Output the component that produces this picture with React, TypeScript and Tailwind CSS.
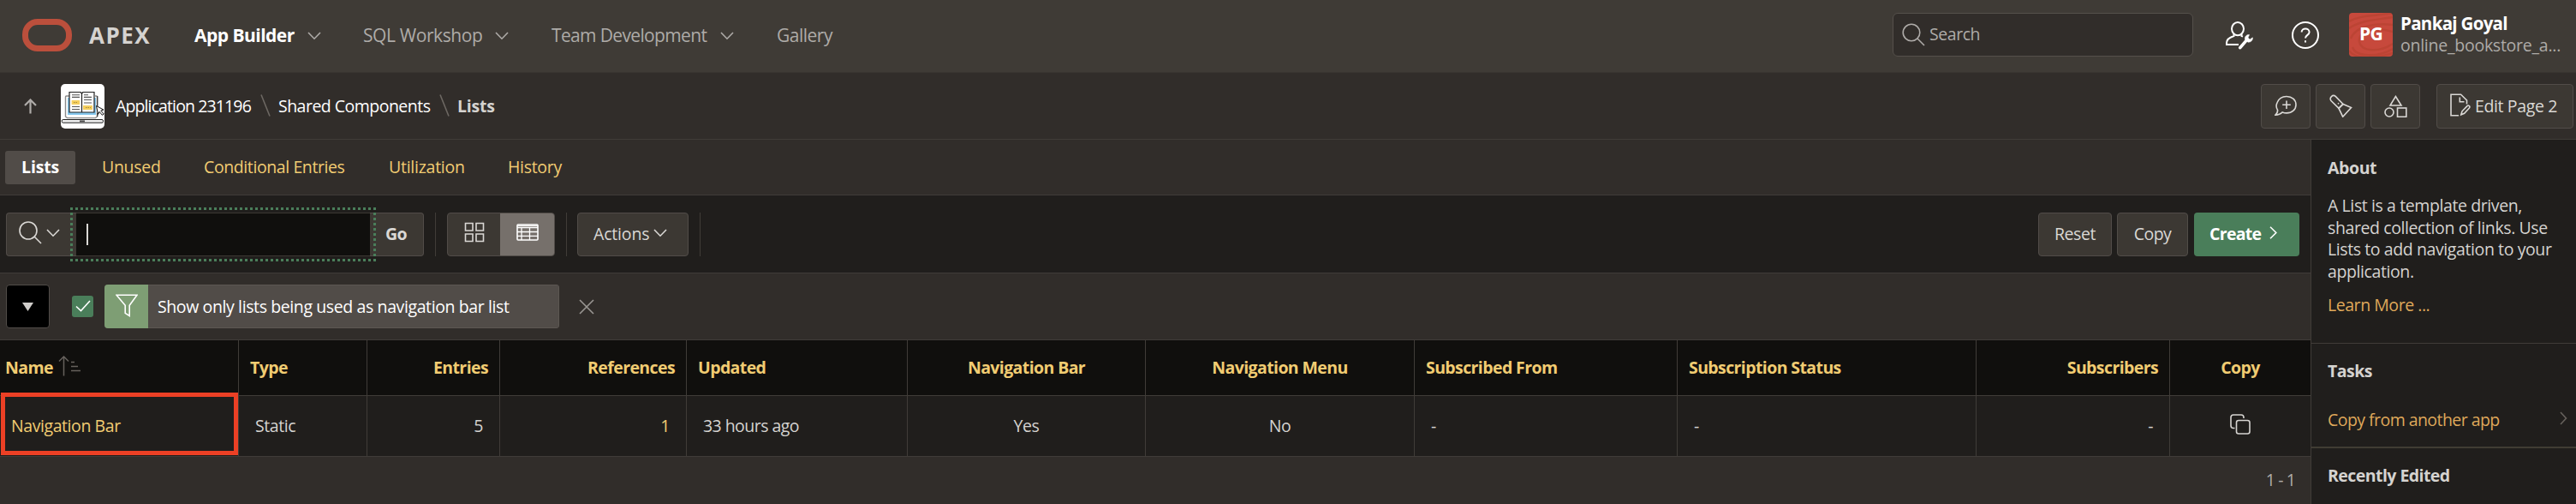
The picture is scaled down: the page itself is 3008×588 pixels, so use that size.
import type { ReactNode } from "react";

function Svg({ w, h, className = "", sw = 1.6, children }: { w: number; h: number; className?: string; sw?: number; children: ReactNode }) {
  return (
    <svg width={w} height={h} viewBox={`0 0 ${w} ${h}`} fill="none" stroke="currentColor" strokeWidth={sw} className={`shrink-0 ${className}`}>
      {children}
    </svg>
  );
}

function Chevron({ className = "" }: { className?: string }) {
  return (
    <Svg w={16} h={10} className={className}>
      <path d="M1 1l7 7.2L15 1" />
    </Svg>
  );
}

function TopBar() {
  return (
    <header className="flex h-[85px] items-center border-b border-[#393531] bg-[#3f3b36]">
      <div className="flex w-[201px] items-center pl-[26px]">
        <Svg w={58} h={38} sw={7} className="-mt-0.5 text-[#bb4f3c]">
          <rect x="3.5" y="3.5" width="51" height="31" rx="14.5" />
        </Svg>
        <span className="-mt-0.5 ml-5 text-[26px] font-bold tracking-[1.5px] text-[#d5d3d0]">APEX</span>
      </div>
      <nav className="flex items-center text-[21px] text-[#aeaba8]">
        <a className="flex w-[197px] items-center justify-between pl-[26px] font-bold tracking-[-0.52px] text-white">
          App Builder<Chevron className="mr-[23px] text-[#aeaba8]" />
        </a>
        <a className="flex w-[220px] items-center justify-between pl-[26px] tracking-[-0.4px]">
          SQL Workshop<Chevron className="mr-[24px]" />
        </a>
        <a className="flex w-[263px] items-center justify-between pl-[26px] tracking-[-0.65px]">
          Team Development<Chevron className="mr-[24px]" />
        </a>
        <a className="pl-[26px] tracking-[-0.5px]">Gallery</a>
      </nav>
      <div className="ml-auto flex items-center">
        <div className="-mt-1 flex h-[51px] w-[351px] items-center rounded-[6px] border-[1.5px] border-[#55504b] bg-[#312d2a] pl-[10px] text-[#aeaba8]">
          <Svg w={27} h={27}>
            <circle cx="11" cy="11" r="9.8" />
            <path d="M18 18l8 8" />
          </Svg>
          <span className="ml-[5px] text-[19.5px] tracking-[-0.45px]">Search</span>
        </div>
        <Svg w={32} h={33} sw={2} className="-mt-0.5 ml-[38px] text-white">
          <ellipse cx="14" cy="8.6" rx="7" ry="7.6" />
          <path d="M9.5 15v2c-5 1.6-8.5 4-8.5 8v2h14M18.5 15v2l1.5 .6" />
          <path d="M16.8 30.6l8-9.2" strokeWidth="3.6" strokeLinecap="round" />
          <path d="M27.6 15.6c-3-.6-6 2.2-5 5.6l3.4 3c3 .4 6-2.2 5.4-5.4l-3.2 2.2-2.2-2z" fill="currentColor" strokeWidth=".5" />
        </Svg>
        <Svg w={32} h={32} sw={2} className="-mt-0.5 ml-[45px] text-white">
          <circle cx="16" cy="16" r="15" />
          <path d="M11.6 12.6c0-5.6 9-5.6 9 0 0 3.4-4.6 3.2-4.6 7" />
          <path d="M16 22.2v2.4" />
        </Svg>
        <div className="-mt-1 ml-[35px] flex size-[51px] items-center justify-center overflow-hidden rounded-[4px] bg-[#c74a3d]">
          <div className="relative flex size-[51px] items-center justify-center">
            <Svg w={51} h={51} sw={2.4} className="absolute inset-0 text-[#b4412f] opacity-60">
              <path d="M0 10c14-8 30-6 51-10M0 18C14 8 34 8 51 5M2 30C8 14 34 12 51 14M51 22C28 16 10 22 12 34c3 12 24 12 39 2M51 42C34 52 8 52 4 40M0 44c6 10 30 10 51 3" />
            </Svg>
            <span className="relative text-[21px] font-bold tracking-[-0.6px] text-white">PG</span>
          </div>
        </div>
        <div className="-mt-1 ml-[9px] flex w-[205px] flex-col text-[20.5px] leading-[26px]">
          <span className="font-bold tracking-[-0.7px] text-white">Pankaj Goyal</span>
          <span className="text-[19.5px] tracking-[-0.25px] text-[#aeaba8]">online_bookstore_a...</span>
        </div>
      </div>
    </header>
  );
}

function AppIcon() {
  return (
    <svg width="51" height="52" viewBox="0 0 51 52" className="ml-[28px] shrink-0">
      <rect width="51" height="52" rx="5" fill="#fff" />
      <path d="M10 14H6.500q-1 0-1 1v23l2 1.600h33l2-1.600V15q0-1-1-1H40" fill="none" stroke="#8b8b8b" strokeWidth="1.400" />
      <path d="M42.800 14v12M42.800 34v4" stroke="#222" strokeWidth="1" />
      <path d="M8 16h33v20H8z" fill="#86c8ee" />
      <path d="M10 9.500h13.200l1.300 1.500 1.300-1.500H39V33H10z" fill="#fff" stroke="#222" strokeWidth="1.200" />
      <path d="M24.500 11v22" stroke="#222" strokeWidth="1.200" />
      <path d="M13 12.800h9M13 15.400h9M27 12.800h5M27 15.400h9M27 18.500h9M27 22h9M13 26.500h9M13 29.500h9" stroke="#555" strokeWidth="1.100" />
      <path d="M12.600 19h9.500v5h-9.500zM26 25h11v5H26z" fill="#f5cf5f" />
      <path d="M15 21.500h5M29 27.500h6" stroke="#a88f3c" strokeWidth="1" strokeDasharray="1.500 1" />
      <path d="M41.500 25.500l8.500 4.600-3.200 1 3.400 3.900-1.800 1.300-3.300-3.900-1.600 3z" fill="#fff" stroke="#111" strokeWidth="1" />
      <rect x="1.200" y="41.500" width="48.300" height="3.700" rx="1.500" fill="#eee" stroke="#222" strokeWidth="1" />
      <path d="M22 43.400h6" stroke="#444" strokeWidth="1.800" />
    </svg>
  );
}

function Slash({ className }: { className: string }) {
  return (
    <Svg w={12} h={26} className={`text-[#6d6863] ${className}`}>
      <path d="M1 .5l10 25" />
    </Svg>
  );
}

const toolBtn = "flex h-[52px] w-[58px] items-center justify-center rounded-[4px] border-[1.5px] border-[#514c48] bg-[#3c3833]";

function BreadcrumbBar() {
  return (
    <div className="flex h-[78px] items-center border-b border-[#403c38] bg-[#312d2a] text-white">
      <Svg w={15} h={18} sw={2.2} className="ml-7 text-[#aeaba8]">
        <path d="M7.500 17.500V2M1 8l6.500-6.500L14 8" />
      </Svg>
      <AppIcon />
      <span className="ml-[13px] w-[169px] tracking-[-0.88px]">Application 231196</span>
      <Slash className="-mt-0.5" />
      <span className="ml-[9px] w-[188px] tracking-[-0.52px]">Shared Components</span>
      <Slash className="-mt-0.5" />
      <span className="ml-[9px] font-bold tracking-[-0.2px] text-[#d5d3d0]">Lists</span>
      <div className="ml-auto flex items-center pr-[3px] text-[#dad8d5]">
        <div className={toolBtn}>
          <Svg w={26} h={25}>
            <path d="M3.600 17.500C1.800 14.800 2 11 3 8.800 5 3.800 9.200 1.500 14 1.500c6.200 0 11 4 11 9.700 0 5.600-4.600 9.700-11 9.700-2 0-3.400-.4-4.800-1-2 2-4.600 3.200-8.200 3.200 1.800-1.400 2.600-3.200 2.600-5.600z" />
            <path d="M14 6.500v9.600M9.200 11.300h9.600" />
          </Svg>
        </div>
        <div className={`${toolBtn} ml-[6px]`}>
          <Svg w={27} h={27}>
            <path d="M2 7.500C-.5 3.800 4 -.2 7.200 2.400L16 11.400l-5 5z" />
            <path d="M11 16.400l5-5 9.500 4.200-9.800 10.600z" />
            <path d="M10 10.200l1 1" />
          </Svg>
        </div>
        <div className={`${toolBtn} ml-[6px]`}>
          <Svg w={27} h={26}>
            <path d="M13.400 1.500L20 12H7z" />
            <circle cx="6" cy="20" r="5" />
            <rect x="15.500" y="15" width="10.300" height="10.300" />
          </Svg>
        </div>
        <div className="ml-[19px] flex h-[52px] w-[160px] items-center rounded-[4px] border-[1.5px] border-[#514c48] bg-[#3c3833] pl-[15px]">
          <Svg w={24} h={27} className="-mt-0.5">
            <path d="M10 25.700H1V1.300h11.600L19.500 8v4.500M11.300 4.500v5.200h5.200" />
            <path d="M12.800 24.800l1.200-4 6-6.200c1.500-1.500 3.800.6 2.400 2.400l-5.800 6.300z" />
          </Svg>
          <span className="ml-[5px] tracking-[-0.37px]">Edit Page 2</span>
        </div>
      </div>
    </div>
  );
}

function Tabs() {
  return (
    <div className="flex h-[65px] items-center border-b border-[#403c38] bg-[#312d2a] pl-[6px] text-[#f1cc72]">
      <span className="flex h-[39px] w-[82px] items-center justify-center rounded-[3px] bg-[#514c48] font-bold tracking-[-0.2px] text-white">Lists</span>
      <span className="ml-[31px] w-[119px] tracking-[-0.3px]">Unused</span>
      <span className="w-[216px] tracking-[-0.4px]">Conditional Entries</span>
      <span className="w-[139px] tracking-[-0.25px]">Utilization</span>
      <span className="tracking-[-0.3px]">History</span>
    </div>
  );
}

const btn = "flex h-[51px] items-center rounded-[4px] border-[1.5px] border-[#514c48] bg-[#3c3833]";

function Toolbar() {
  return (
    <div className="flex h-[91px] items-center border-b border-[#403c38] bg-[#201e1c] px-[7px] text-[#dad8d5]">
      <div className="relative flex h-[51px] w-[488px]">
        <div className="flex w-[82px] items-center rounded-l-[4px] border-[1.5px] border-r-0 border-[#514c48] bg-[#3c3833] pl-[14px]">
          <Svg w={27} h={27} className="-mt-1">
            <circle cx="11" cy="11" r="10" />
            <path d="M18 18l8 8" />
          </Svg>
          <Chevron className="ml-[5px] -mt-0.5" />
        </div>
        <div className="flex w-[343px] items-center border-y border-[#3c3833] bg-[#100f0d] pl-3">
          <div className="h-[25px] w-[2px] bg-[#dad8d5]" />
        </div>
        <div className="flex flex-1 items-center rounded-r-[4px] border-[1.5px] border-l-0 border-[#514c48] bg-[#3c3833] pl-[18px] font-bold tracking-[-0.5px]">Go</div>
        <svg width="357" height="63" className="absolute top-[-6px] left-[75px]">
          <rect x="1.5" y="1.5" width="354" height="60" fill="none" stroke="#4a7e5a" strokeWidth="3" strokeDasharray="3 3" strokeDashoffset="1.5" />
        </svg>
      </div>
      <div className="ml-[13px] h-[51px] w-px bg-[#403c38]" />
      <div className="ml-[13px] flex h-[51px] w-[126px] overflow-hidden rounded-[4px] border-[1.5px] border-[#514c48] bg-[#3c3833]">
        <div className="flex w-[61px] items-center justify-center">
          <Svg w={24} h={24} className="-mt-1">
            <path d="M1.500 1.500h8.500v8.500H1.500zM14 1.500h8.500v8.500H14zM1.500 14h8.500v8.500H1.500zM14 14h8.500v8.500H14z" />
          </Svg>
        </div>
        <div className="flex flex-1 items-center justify-center bg-[#76706b] text-white">
          <Svg w={26} h={20} className="-mt-1">
            <rect x="1" y="1" width="24" height="18" rx="1" />
            <path d="M1 4.500h24M1 9.500h24M1 14.300h24M6 4.500V19M15.500 4.500V19" strokeWidth="1.300" />
            <path d="M1 2.500h24" strokeWidth="1" />
          </Svg>
        </div>
      </div>
      <div className="ml-[13px] h-[51px] w-px bg-[#403c38]" />
      <div className={`${btn} ml-3 w-[130px] pl-[18px] tracking-[-0.17px]`}>
        Actions<Chevron className="ml-[5px] -mt-0.5" />
      </div>
      <div className="ml-[13px] h-[51px] w-px bg-[#403c38]" />
      <div className={`${btn} ml-auto w-[86px] justify-center tracking-[-0.4px]`}>Reset</div>
      <div className={`${btn} ml-[6px] w-[83px] justify-center tracking-[-0.6px]`}>Copy</div>
      <div className="mr-[6px] ml-[7px] flex h-[51px] w-[123px] items-center rounded-[4px] bg-[#4a7e5a] pl-[18px] font-bold tracking-[-0.7px] text-white">
        Create
        <Svg w={9} h={15} className="-mt-1 ml-[10px]">
          <path d="M1 .8l6.800 6.700L1 14.200" />
        </Svg>
      </div>
    </div>
  );
}

function FilterBar() {
  return (
    <div className="flex h-[78px] items-center border-b border-[#403c38] bg-[#312d2a] pl-[7px]">
      <div className="flex size-[51px] items-center justify-center rounded-[4px] border-[1.5px] border-[#514c48] bg-black">
        <svg width="13" height="10" className="fill-[#d0cecb]"><path d="M0 0h13L6.500 10z" /></svg>
      </div>
      <div className="ml-[26px] flex size-[25px] items-center justify-center rounded-[3px] bg-[#4a7e5a] text-white">
        <Svg w={18} h={14} className="-mt-0.5"><path d="M1 7.500l5.500 5L17 1" /></Svg>
      </div>
      <div className="ml-[13px] flex h-[51px] w-[531px] overflow-hidden rounded-[4px] bg-[#514c48] text-white">
        <div className="flex w-[51px] items-center justify-center bg-[#7e9e74]">
          <Svg w={26} h={27} className="-mt-0.5"><path d="M1 1.200h24l-8.800 12v12.300l-5-3.200v-9z" /></Svg>
        </div>
        <span className="flex flex-1 items-center border-[1.5px] border-l-0 border-[#5c5752] pl-[11px] tracking-[-0.39px]">Show only lists being used as navigation bar list</span>
      </div>
      <Svg w={18} h={18} className="ml-[23px] text-[#9a9793]"><path d="M1 1l16 16M17 1L1 17" /></Svg>
    </div>
  );
}

const columns = [
  { title: "Name", cls: "", value: "Navigation Bar" },
  { title: "Type", cls: "", value: "Static" },
  { title: "Entries", cls: "justify-end", value: "5" },
  { title: "References", cls: "justify-end", value: "1" },
  { title: "Updated", cls: "", value: "33 hours ago" },
  { title: "Navigation Bar", cls: "justify-center", value: "Yes" },
  { title: "Navigation Menu", cls: "justify-center", value: "No" },
  { title: "Subscribed From", cls: "", value: "-" },
  { title: "Subscription Status", cls: "", value: "-" },
  { title: "Subscribers", cls: "justify-end", value: "-" },
  { title: "Copy", cls: "justify-center", value: "" },
];

const grid = "grid grid-cols-[279px_150px_155px_218px_258px_278px_314px_307px_349px_226px_164px]";

function Table() {
  return (
    <div className="relative">
      <div className={`${grid} h-[65px] border-b border-[#403c38] bg-[#100f0d] font-bold tracking-[-0.6px] text-[#f1cc72]`}>
        {columns.map((c, i) => (
          <div key={c.title} className={`flex items-center ${c.cls} ${i === 0 ? "pl-[6px]" : "px-[13px]"} ${i < 10 ? "border-r border-[#403c38]" : ""}`}>
            {c.title}
            {i === 0 && (
              <Svg w={28} h={24} className="-mt-1 ml-[6px] text-[#66615c]" sw={1.500}>
                <path d="M6.500 23.500V1.500M1 6.500l5.500-5.500L12 6.500M15 7.500h4M15 12.500h8M15 17.500h11" />
              </Svg>
            )}
          </div>
        ))}
      </div>
      <div className={`${grid} h-[71px] border-b border-[#403c38] bg-[#201e1c] text-[#d5d3d0]`}>
        {columns.map((c, i) => (
          <div
            key={c.title}
            className={`flex items-center ${c.cls} ${i === 0 ? "pl-[13px]" : "px-[19px]"} ${i < 10 ? "border-r border-[#403c38]" : ""} ${i === 0 || i === 3 ? "text-[#f1cc72]" : ""} ${i === 4 ? "tracking-[-0.55px]" : "tracking-[-0.42px]"}`}
          >
            {c.value}
            {i === 10 && (
              <Svg w={24} h={24} className="-mt-1">
                <path d="M5.500 16.500H4c-2 0-3-1-3-3V4c0-2 1-3 3-3h9c2 0 3 1 3 3v1" />
                <rect x="7.500" y="7.500" width="15.500" height="15.500" rx="2.500" />
              </Svg>
            )}
          </div>
        ))}
      </div>
      <div className="absolute top-[61px] left-px h-[73px] w-[277px] border-[5px] border-[#ec4025]" />
    </div>
  );
}

function Sidebar() {
  return (
    <aside className="w-[310px] border-l border-[#403c38] bg-[#201e1c] text-[#d5d3d0]">
      <section className="h-[238px] border-b border-[#403c38] px-[19px] pt-5">
        <h2 className="leading-[26px] font-bold tracking-[-0.4px]">About</h2>
        <p className="mt-[18px] leading-[25.7px] tracking-[-0.4px] whitespace-nowrap">
          A List is a template driven,<br />shared collection of links. Use<br />Lists to add navigation to your<br />application.
        </p>
        <p className="mt-[13px] leading-[26px] tracking-[-0.45px] text-[#dfa85a]">Learn More ...</p>
      </section>
      <section className="h-[122px] border-b-2 border-[#403c33] px-[19px] pt-[19px]">
        <h2 className="leading-[26px] font-bold tracking-[-0.5px]">Tasks</h2>
        <div className="mt-[31px] flex items-center justify-between leading-[26px] tracking-[-0.55px] text-[#dfa85a]">
          Copy from another app
          <Svg w={9} h={16} className="-mt-1 -mr-[9px] text-[#66615c]"><path d="M1 1l6.500 7L1 15" /></Svg>
        </div>
      </section>
      <section className="px-[19px] pt-[19px]">
        <h2 className="leading-[26px] font-bold tracking-[-0.55px]">Recently Edited</h2>
      </section>
    </aside>
  );
}

export default function App() {
  return (
    <div className="flex h-[588px] w-[3008px] flex-col overflow-hidden bg-[#312d2a] font-['Open_Sans','Noto_Sans',sans-serif] text-[19.5px] font-[460] whitespace-nowrap">
      <TopBar />
      <BreadcrumbBar />
      <div className="flex flex-1">
        <main className="w-[2698px]">
          <Tabs />
          <Toolbar />
          <FilterBar />
          <Table />
          <div className="flex h-[54px] items-center justify-end pr-[18px] tracking-[-0.9px] text-[#aeaba8]">1 - 1</div>
        </main>
        <Sidebar />
      </div>
    </div>
  );
}
